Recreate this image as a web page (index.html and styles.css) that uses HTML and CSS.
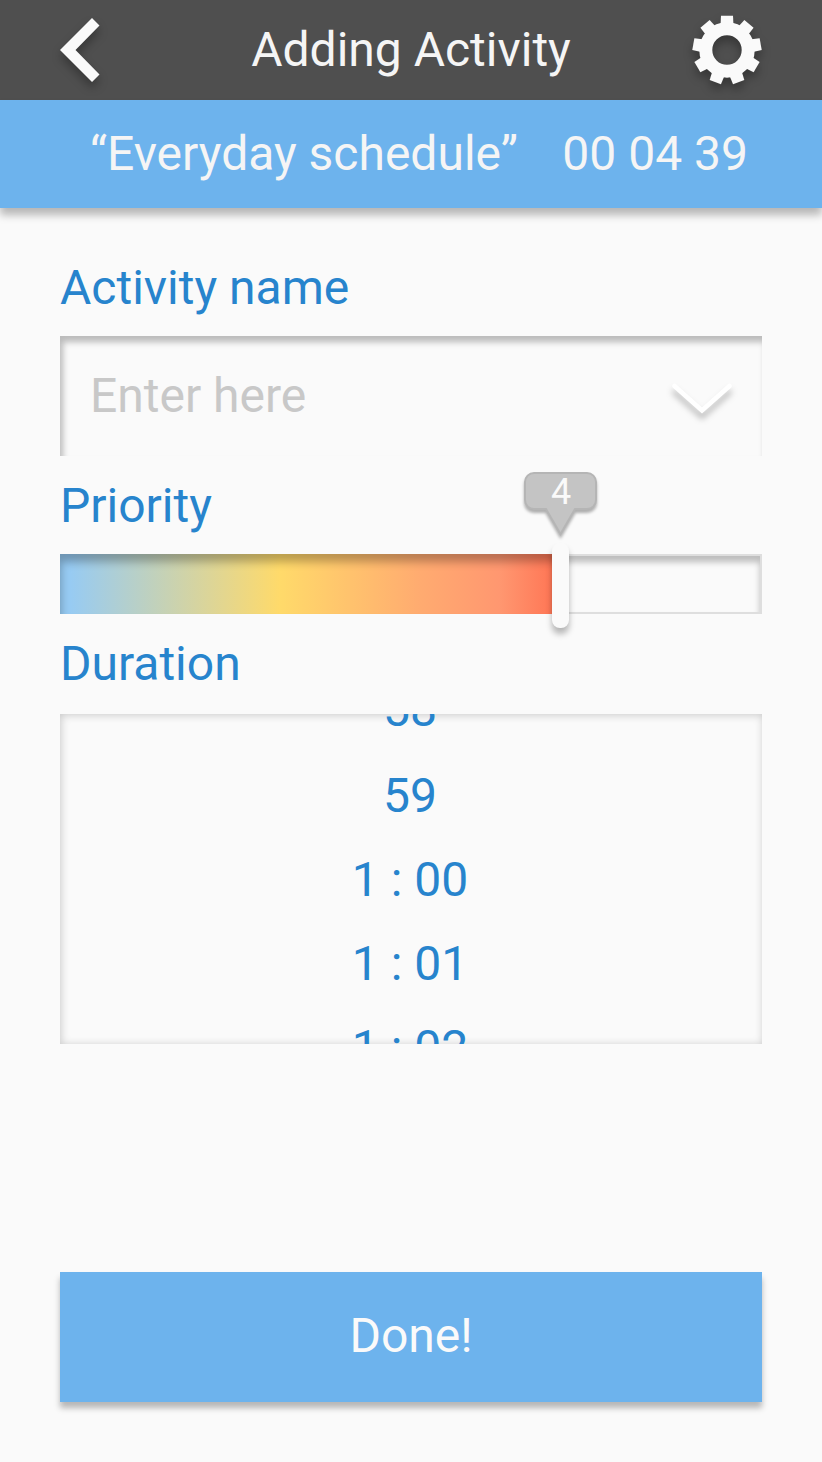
FILE: index.html
```
<!DOCTYPE html>
<html lang="en">
<head>
<meta charset="utf-8">
<title>Adding Activity</title>
<link rel="stylesheet" href="styles.css">
</head>
<body>
<div class="screen">
  <header class="topbar">
    <svg class="icon-back" width="40" height="64" viewBox="0 0 40 64"><path d="M0 32 32 0l7.500 7.500L15.500 32l24 24.500L32 64z"/></svg>
    <h1 class="title">Adding Activity</h1>
    <svg class="icon-gear" width="70" height="70" viewBox="-35 -35 70 70">
      <circle r="21.200" fill="none" stroke="#fafafa" stroke-width="13"/>
      <g>
        <path id="tooth" d="M-6-34.200H6L6.500-24h-13z"/>
        <use href="#tooth" transform="rotate(40)"/>
        <use href="#tooth" transform="rotate(80)"/>
        <use href="#tooth" transform="rotate(120)"/>
        <use href="#tooth" transform="rotate(160)"/>
        <use href="#tooth" transform="rotate(200)"/>
        <use href="#tooth" transform="rotate(240)"/>
        <use href="#tooth" transform="rotate(280)"/>
        <use href="#tooth" transform="rotate(320)"/>
      </g>
    </svg>
  </header>
  <div class="banner"><span>“Everyday schedule”</span><span>00 04 39</span></div>
  <main class="form">
    <div class="label label-name">Activity name</div>
    <div class="field">
      <span>Enter here</span>
      <svg class="icon-down" width="60" height="34" viewBox="0 0 60 34"><path d="M2.500 4 30 28.500 57.500 4"/></svg>
    </div>
    <div class="label label-priority">Priority</div>
    <div class="slider">
      <div class="slider-fill"></div>
      <div class="callout">
        <svg class="callout-shape" width="74" height="64" viewBox="0 0 74 64"><path d="M10 1H63a9 9 0 0 1 9 9V28a9 9 0 0 1-9 9H51L36.500 62 22 37H10a9 9 0 0 1-9-9V10a9 9 0 0 1 9-9z"/></svg>
        <span class="callout-value">4</span>
      </div>
      <div class="thumb"></div>
    </div>
    <div class="label label-duration">Duration</div>
    <div class="picker">
      <div>58</div>
      <div>59</div>
      <div>1 : 00</div>
      <div>1 : 01</div>
      <div>1 : 02</div>
    </div>
    <button class="done">Done!</button>
  </main>
</div>
</body>
</html>
```
FILE: styles.css
```
* { box-sizing: border-box; }
body {
  margin: 0;
  background: #fafafa;
  font-family: Roboto, sans-serif;
  font-size: 48px;
  line-height: 60px;
  color: #2784cd;
}
.screen { width: 822px; height: 1462px; overflow: hidden; }
.topbar {
  height: 100px;
  padding: 0 60px;
  display: flex;
  align-items: center;
  justify-content: space-between;
  background: #4f4f4f;
}
.title { margin: 0 0 0 30px; font-size: 48px; font-weight: 400; color: #f5f5f5; }
.topbar svg { fill: #fafafa; overflow: visible; filter: drop-shadow(0 6px 5px rgba(0, 0, 0, .3)); }
.banner {
  height: 108px;
  padding: 0 74px 0 90px;
  display: flex;
  align-items: center;
  justify-content: space-between;
  background: #6db3ed;
  color: #f5f5f5;
  box-shadow: 0 7px 8px rgba(0, 0, 0, .27);
}
.form { padding: 0 60px; display: flex; flex-direction: column; }
.label { height: 60px; }
.label-name { margin: 50px 0 18px; }
.field {
  height: 120px;
  padding: 0 30px;
  display: flex;
  align-items: center;
  justify-content: space-between;
  color: #c8c8c8;
  box-shadow: inset 3px 6px 6px rgba(0, 0, 0, .26);
}
.icon-down {
  overflow: visible;
  margin-top: 6px;
  fill: none;
  stroke: #fff;
  stroke-width: 4.5px;
  stroke-linecap: round;
  filter: drop-shadow(0 6px 3px rgba(0, 0, 0, .27));
}
.label-priority { margin: 20px 0 18px; }
.slider {
  position: relative;
  height: 60px;
  border: 2px solid #dedede;
  box-shadow: inset 0 6px 6px rgba(0, 0, 0, .25);
}
.slider-fill {
  width: 500px;
  height: 60px;
  margin: -2px 0 0 -2px;
  background: linear-gradient(90deg, #97cbf3 2%, #ffda6a 44%, #ffab70 72%, #ff9770 88%, #ff7857 98%);
  box-shadow: inset 1px 8px 8px rgba(0, 0, 0, .27);
}
.callout {
  position: absolute;
  left: 462px;
  top: -84px;
  width: 74px;
  height: 64px;
}
.callout-shape {
  position: absolute;
  inset: 0;
  overflow: visible;
  fill: #c4c4c4;
  stroke: #b5b5b5;
  stroke-width: 2px;
  filter: drop-shadow(0 3px 1.5px rgba(0, 0, 0, .3));
}
.callout-value {
  position: relative;
  display: block;
  text-align: center;
  font-size: 36px;
  line-height: 40px;
  color: #fafafa;
}
.thumb {
  position: absolute;
  left: 490px;
  top: -13px;
  width: 17px;
  height: 85px;
  border-radius: 8px;
  background: #fafafa;
  box-shadow: 0 6px 6px rgba(0, 0, 0, .28);
}
.label-duration { margin: 20px 0 20px; }
.picker {
  height: 330px;
  padding-right: 2px;
  overflow: hidden;
  text-align: center;
  line-height: 84px;
  box-shadow: inset 1px 1px 8px rgba(0, 0, 0, .2);
}
.picker div:first-child { margin: -46px 0 2px; }
.done {
  height: 130px;
  margin-top: 228px;
  padding: 0 0 3px;
  border: 0;
  background: #6db3ed;
  color: #fafafa;
  font: inherit;
  box-shadow: 0 6px 6px rgba(0, 0, 0, .27);
}
```
